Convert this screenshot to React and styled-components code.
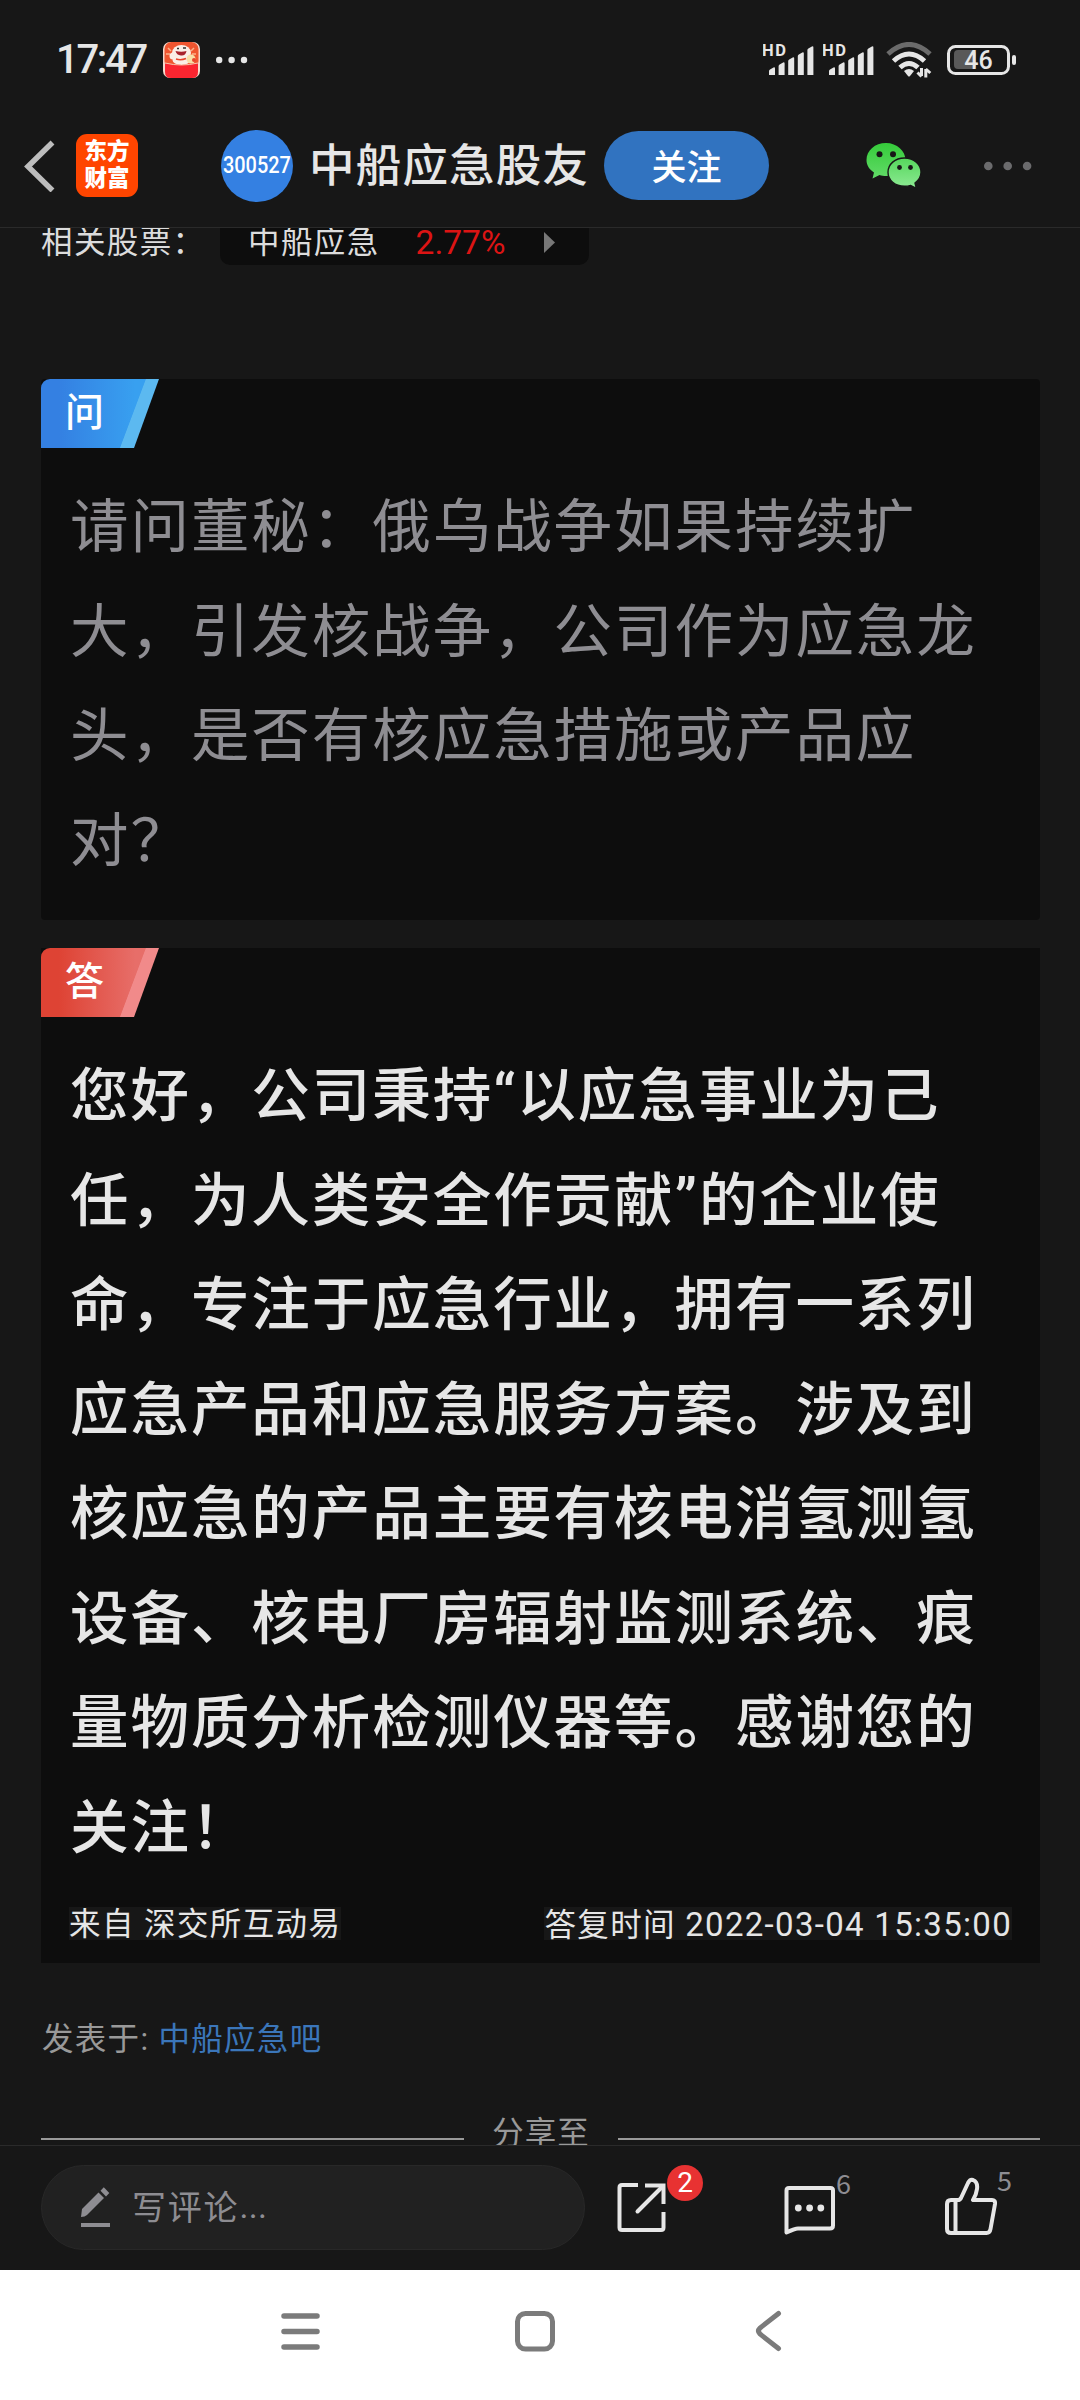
import styled, { createGlobalStyle } from 'styled-components';

const GlobalStyle = createGlobalStyle`
  * {
    box-sizing: border-box;
  }

  body {
    margin: 0;
    background: #171717;
    font-family: Roboto, 'Noto Sans CJK SC', sans-serif;
    color: #e6e6e6;
  }
`;

const Screen = styled.div`
  width: 1080px;
  height: 2400px;
  display: flex;
  flex-direction: column;
  background: #171717;
  overflow: hidden;
  white-space: nowrap;
`;

const StatusBar = styled.div`
  height: 120px;
  flex: none;
  display: flex;
  align-items: center;
  padding: 0 63px 0 56px;

  .app {
    margin-left: 17px;
  }

  .dots {
    margin-left: 15px;
    margin-right: auto;
  }

  .signal {
    margin-right: 9px;
  }

  .wifi {
    margin-left: 3px;
    margin-right: 15px;
  }
`;

const Clock = styled.span`
  font-size: 40px;
  font-weight: 500;
  letter-spacing: -2.3px;
  line-height: 40px;
  width: 90px;
`;

const Header = styled.header`
  height: 108px;
  flex: none;
  display: flex;
  align-items: center;
  padding: 0 47px 16px 24px;
  border-bottom: 1px solid #2a2a2a;

  .wechat {
    margin-left: 97px;
    margin-right: 61px;
  }
`;

const Logo = styled.div`
  width: 62px;
  height: 63px;
  margin-left: 21px;
  border-radius: 11px;
  background: #ff4500;
  color: #fff;
  font-size: 22.5px;
  font-weight: 900;
  line-height: 27px;
  padding-top: 4px;
  text-align: center;
`;

const Avatar = styled.div`
  width: 72px;
  height: 72px;
  flex: none;
  margin-left: 83px;
  border-radius: 50%;
  background: #3480e2;
  color: #fff;
  display: flex;
  align-items: center;
  justify-content: center;
  padding-bottom: 2px;
  font-size: 24px;
  font-weight: 500;

  span {
    transform: scaleX(0.83);
  }
`;

const Title = styled.h1`
  margin: 3px 0 0 16px;
  width: 295px;
  font-size: 45.5px;
  font-weight: 500;
  letter-spacing: 1.2px;
  line-height: 60px;
`;

const Follow = styled.button`
  width: 165px;
  height: 69px;
  flex: none;
  border: none;
  border-radius: 35px;
  background: #3173c0;
  color: #fff;
  font-family: inherit;
  font-size: 35px;
  font-weight: 500;
  padding: 0 0 2px;
`;

const Content = styled.main`
  height: 1917px;
  flex: none;
  overflow: hidden;
  padding: 0 40px 0 41px;
`;

const Stocks = styled.div`
  display: flex;
  height: 58px;
  margin-top: -21px;
  font-size: 31.5px;
  letter-spacing: 1.4px;
  line-height: 72px;
  color: #dcdcdc;
`;

const StockPill = styled.div`
  width: 369px;
  height: 58px;
  margin-left: 14px;
  padding-left: 28px;
  border-radius: 10px;
  background: #0d0d0d;
  display: flex;

  .change {
    color: #dc1414;
    font-size: 33.5px;
    letter-spacing: 0;
    margin-left: 36px;
  }

  svg {
    margin: 25px 0 0 39px;
  }
`;

const StockLabel = styled.span`
  width: 165px;
`;

const Card = styled.section`
  height: ${({ $height }) => $height}px;
  margin-top: ${({ $top }) => $top}px;
  background: #0d0d0d;
  border-radius: ${({ $radius }) => $radius || 0}px;
`;

const Tag = styled.div`
  width: 118px;
  height: 69px;
  padding-left: 24px;
  border-top-left-radius: 9px;
  clip-path: polygon(0 0, 100% 0, 93px 100%, 0 100%);
  background: ${({ $stripe, $from, $to }) =>
    `linear-gradient(110.6deg, transparent 72.6%, ${$stripe} 73.2%), linear-gradient(90deg, ${$from} 15%, ${$to} 80%)`};
  color: #fff;
  font-size: 39px;
  font-weight: 500;
  line-height: 68px;
`;

const Passage = styled.div`
  padding: 27px 0 0 29px;
  font-size: 58.5px;
  letter-spacing: 1.95px;
  line-height: 104.5px;
  font-weight: ${({ $weight }) => $weight};
  color: ${({ $color }) => $color};
`;

const Source = styled.div`
  display: flex;
  justify-content: space-between;
  margin: 27px 28px 0;
  font-size: 31.5px;
  line-height: 33px;
  color: #e6e6e6;

  span {
    height: 33px;
    padding-top: 1px;
    background: #171717;
    letter-spacing: 1.4px;
  }

  time {
    font-size: 33px;
    letter-spacing: 1.3px;
  }
`;

const PostedIn = styled.div`
  margin-top: 54px;
  padding-left: 1px;
  font-size: 31.5px;
  letter-spacing: 1.3px;
  line-height: 46px;
  color: #999;

  a {
    color: #3b76ba;
  }
`;

const ShareTitle = styled.div`
  display: grid;
  grid-template-columns: 423px 1fr 422px;
  align-items: center;
  margin-top: 48px;
  text-align: center;
  font-size: 31.5px;
  letter-spacing: 1px;
  line-height: 46px;
  color: #999;

  i {
    height: 2px;
    margin-top: 10px;
    background: #999;
  }
`;

const CommentBar = styled.footer`
  height: 125px;
  flex: none;
  border-top: 1px solid #2a2a2a;
  display: flex;
  align-items: flex-start;
  padding: 19px 0 0 41px;
`;

const CommentInput = styled.div`
  width: 544px;
  height: 85px;
  border: 1px solid #282828;
  border-radius: 43px;
  background: #212121;
  color: #8e8d92;
  display: flex;
  align-items: center;
  padding: 0 0 4px 38px;
  font-size: 34px;
  letter-spacing: 1.8px;

  svg {
    margin: 3px 20px 0 0;
  }

  span {
    letter-spacing: 0.3px;
  }
`;

const Action = styled.div`
  display: flex;
  align-items: flex-start;
  margin-left: ${({ $left }) => $left}px;

  svg {
    margin-top: ${({ $drop }) => $drop}px;
  }
`;

const Badge = styled.span`
  width: 36px;
  height: 36px;
  border-radius: 50%;
  background: #e83232;
  color: #fff;
  font-size: 28px;
  line-height: 36px;
  text-align: center;
`;

const Count = styled.span`
  font-size: 27px;
  line-height: 28px;
  margin-top: ${({ $top }) => $top}px;
  color: #8e8d92;
  font-family: 'Noto Sans CJK SC', sans-serif;
`;

const NavBar = styled.nav`
  height: 130px;
  flex: none;
  background: #fff;
  display: flex;
  align-items: center;
  padding: 0 0 8px 280px;

  svg:nth-child(2) {
    margin: 0 199px 0 193px;
  }
`;

const HEIGHTS = [8, 13, 18, 23, 29];

function Signal() {
  return (
    <svg className="signal" width="51" height="36" viewBox="0 0 51 36">
      <text x="-1" y="14" fontSize="16.5" fontWeight="700" fill="#e6e6e6" textLength="24">
        HD
      </text>
      {HEIGHTS.map((h, i) => (
        <path
          key={h}
          d={`M${6 + i * 9.6} 33v${-h + 4}q0-1 1-1.600l3.500-2q1.500-.6 1.500 1V33z`}
          fill="#e6e6e6"
        />
      ))}
    </svg>
  );
}

function Wifi() {
  return (
    <svg className="wifi" width="46" height="36" viewBox="0 0 46 36" fill="none">
      <path d="M2 12Q23 -7 44 12" stroke="#6b6b6b" strokeWidth="5" />
      <path d="M7.500 19Q23 5 38.500 19" stroke="#e6e6e6" strokeWidth="5" />
      <path d="M14 25.500Q23 17.500 32 25.500" stroke="#e6e6e6" strokeWidth="5" />
      <path d="M18 29q5-4 10 0l-4 5q-1 1-2 0z" fill="#e6e6e6" />
      <path d="M35.500 26v8M31.500 30.500l4 4M39.800 35.500v-8.500M39.800 27l4.500 4" stroke="#e6e6e6" strokeWidth="3" />
    </svg>
  );
}

function Battery() {
  return (
    <svg width="70" height="32" viewBox="0 0 70 32">
      <rect x="7" y="6" width="22" height="19" rx="4" fill="#595959" />
      <rect x="1.500" y="2.500" width="60" height="27" rx="7" fill="none" stroke="#e6e6e6" strokeWidth="3" />
      <rect x="65" y="11" width="4" height="10" rx="2" fill="#e6e6e6" />
      <text x="31.500" y="25" fontSize="25" fontWeight="500" fill="#e6e6e6" textAnchor="middle">
        46
      </text>
    </svg>
  );
}

function AppBadge() {
  return (
    <svg className="app" width="37" height="36" viewBox="0 0 37 36">
      <rect width="37" height="36" rx="7" fill="#f6d9cc" />
      <rect x="1.500" y="0" width="34" height="26" rx="7" fill="#f0552f" />
      <path d="M5 6l3 3M3 12h4M31 6l-3 3M33 12h-4" stroke="#fbb28a" strokeWidth="1.500" />
      <ellipse cx="18.500" cy="11" rx="9.500" ry="8" fill="#fbeee6" />
      <ellipse cx="18.500" cy="18" rx="9" ry="5" fill="#fbeee6" />
      <circle cx="10" cy="14" r="3.500" fill="#fbeee6" />
      <circle cx="28" cy="17" r="4.500" fill="#f8dfa8" />
      <circle cx="31" cy="18" r="2" fill="#e8452c" />
      <path d="M12.500 9q6 1.500 11 0-1 5-5.500 4.500t-5.500-4.500" fill="#a8222c" />
      <path d="M14 6.500h2M20 6h3" stroke="#333" strokeWidth="1.500" />
      <path d="M13 17q5 1.500 10-.5" stroke="#e8452c" strokeWidth="1.500" fill="none" />
      <path d="M2 21q16.500 4 33 0v9q0 6-6 6H8q-6 0-6-6z" fill="#fb2530" />
      <path d="M2 21q16.500 4 33 0" stroke="#f7c4ac" fill="none" />
    </svg>
  );
}

function Dots({ className, width, gap, r, color }) {
  return (
    <svg className={className} width={width} height="12" fill={color}>
      {[0, 1, 2].map((i) => (
        <circle key={i} cx={r + 1 + i * gap} cy="6" r={r} />
      ))}
    </svg>
  );
}

function WeChat() {
  return (
    <svg className="wechat" width="56" height="48" viewBox="0 0 56 48">
      <defs>
        <linearGradient id="bubbleBack" x1="0" y1="0" x2="0" y2="1">
          <stop offset="0" stopColor="#35cb3a" />
          <stop offset="1" stopColor="#62db68" />
        </linearGradient>
        <linearGradient id="bubbleFront" x1="0" y1="0" x2="0" y2="1">
          <stop offset="0" stopColor="#55d75c" />
          <stop offset="1" stopColor="#8eea94" />
        </linearGradient>
      </defs>
      <path
        d="M20 1C9 1 .5 8.500 .5 18c0 5.500 3 9.500 7.500 12.500L6.500 36.500l7-3.500c2 .6 4.500 1 6.500 1 11 0 19.500-7 19.500-16S31 1 20 1z"
        fill="url(#bubbleBack)"
      />
      <path
        d="M38.500 16c9.500 0 16.500 6.500 16.500 14.300 0 4.500-2.300 8-6 10.700l1.300 5.300-5.600-2.900c-2 .6-4 .9-6.200.9C29 44.300 22 38.300 22 30.300S29 16 38.500 16z"
        fill="url(#bubbleFront)"
        stroke="#171717"
        strokeWidth="1.400"
      />
      <g fill="#171717">
        <circle cx="13.500" cy="12.300" r="3" />
        <circle cx="27" cy="12.300" r="3" />
        <circle cx="33.500" cy="25.500" r="2.400" />
        <circle cx="44.500" cy="25.500" r="2.400" />
      </g>
    </svg>
  );
}

function Pen() {
  return (
    <svg width="32" height="42" viewBox="0 0 32 42" fill="#8e8d92">
      <path d="M1 31l1-8L18.500 6.500l5.500 5.500L7 29q-2 2-6 2z" />
      <path d="M20.500 4.800L23.800 1.200l5.500 5.800-3.300 3.500z" />
      <rect x="1" y="37" width="29" height="4" />
    </svg>
  );
}

export default function App() {
  return (
    <>
      <GlobalStyle />
      <Screen>
        <StatusBar>
          <Clock>17:47</Clock>
          <AppBadge />
          <Dots className="dots" width={36} gap={12.4} r={3.2} color="#e6e6e6" />
          <Signal />
          <Signal />
          <Wifi />
          <Battery />
        </StatusBar>

        <Header>
          <svg width="31" height="52" viewBox="0 0 31 52" fill="none">
            <path d="M28.500 2.500L4 26.500l24.500 24" stroke="#bdbdbd" strokeWidth="5.500" />
          </svg>
          <Logo>
            东方
            <br />
            财富
          </Logo>
          <Avatar>
            <span>300527</span>
          </Avatar>
          <Title>中船应急股友</Title>
          <Follow>关注</Follow>
          <WeChat />
          <Dots width={50} gap={19.4} r={4.3} color="#6b6b6d" />
        </Header>

        <Content>
          <Stocks>
            <StockLabel>相关股票：</StockLabel>
            <StockPill>
              中船应急
              <span className="change">2.77%</span>
              <svg width="11" height="21" fill="#777">
                <path d="M0 0l11 10.500L0 21z" />
              </svg>
            </StockPill>
          </Stocks>

          <Card $height={541} $top={114} $radius={4}>
            <Tag $stripe="#5cb9f0" $from="#3480e2" $to="#38a0f0">
              问
            </Tag>
            <Passage $weight={400} $color="#8e8d92">
              请问董秘：俄乌战争如果持续扩
              <br />
              大，引发核战争，公司作为应急龙
              <br />
              头，是否有核应急措施或产品应
              <br />
              对？
            </Passage>
          </Card>

          <Card $height={1015} $top={28}>
            <Tag $stripe="#f18a8a" $from="#de4334" $to="#e76e69">
              答
            </Tag>
            <Passage $weight={500} $color="#e6e6e6">
              您好，公司秉持“以应急事业为己
              <br />
              任，为人类安全作贡献”的企业使
              <br />
              命，专注于应急行业，拥有一系列
              <br />
              应急产品和应急服务方案。涉及到
              <br />
              核应急的产品主要有核电消氢测氢
              <br />
              设备、核电厂房辐射监测系统、痕
              <br />
              量物质分析检测仪器等。感谢您的
              <br />
              关注！
            </Passage>
            <Source>
              <span>来自 深交所互动易</span>
              <span>
                答复时间 <time>2022-03-04 15:35:00</time>
              </span>
            </Source>
          </Card>

          <PostedIn>
            发表于: <a>中船应急吧</a>
          </PostedIn>
          <ShareTitle>
            <i />
            分享至
            <i />
          </ShareTitle>
        </Content>

        <CommentBar>
          <CommentInput>
            <Pen />
            写评论<span>...</span>
          </CommentInput>
          <Action $left={31} $drop={16}>
            <svg width="51" height="52" viewBox="0 0 51 52" fill="none" stroke="#e6e6e6" strokeWidth="4">
              <path d="M22 4H6Q3.500 4 3.500 6.500v40Q3.500 49 6 49h39q2.500 0 2.500-2.500V31" />
              <path d="M29 4.500h18.500V23" />
              <path d="M46 6L21.500 30.500" strokeLinecap="round" />
            </svg>
            <Badge>2</Badge>
          </Action>
          <Action $left={80} $drop={19}>
            <svg width="53" height="52" viewBox="0 0 53 52" fill="none" stroke="#e6e6e6" strokeWidth="4">
              <path
                d="M3.500 48.500V6.500Q3.500 4 6 4h41.500Q50 4 50 6.500v35Q50 44.500 47 44.500H15q-3 0-11.500 4z"
                strokeLinejoin="round"
              />
              <g fill="#e6e6e6" stroke="none">
                <circle cx="15.300" cy="24" r="3.400" />
                <circle cx="26.600" cy="24" r="3.400" />
                <circle cx="37.800" cy="24" r="3.400" />
              </g>
            </svg>
            <Count $top={4}>6</Count>
          </Action>
          <Action $left={93} $drop={11}>
            <svg
              width="53"
              height="60"
              viewBox="0 0 53 60"
              fill="none"
              stroke="#e6e6e6"
              strokeWidth="4"
              strokeLinejoin="round"
            >
              <path d="M7 24h7q2 0 3-2L24 7q2-4 5-3 5 2 4 9-.5 5-4 11h19q3.500 0 3 4l-4.500 25q-.6 4-4 4H7q-4 0-4-4V28q0-4 4-4z" />
              <path d="M11.500 24v33" />
            </svg>
            <Count $top={1}>5</Count>
          </Action>
        </CommentBar>

        <NavBar>
          <svg width="41" height="40" stroke="#7b7b7b" strokeWidth="5.500" strokeLinecap="round">
            <path d="M4 5h33M4 20.500h33M4 36h33" />
          </svg>
          <svg width="42" height="42" fill="none" stroke="#7b7b7b" strokeWidth="5">
            <rect x="3.500" y="3.500" width="35" height="35.500" rx="8" />
          </svg>
          <svg width="27" height="42" fill="none" stroke="#7b7b7b" strokeWidth="5" strokeLinecap="round">
            <path d="M23.500 3.500L5 18q-3 3 0 6l18.500 14.500" />
          </svg>
        </NavBar>
      </Screen>
    </>
  );
}
